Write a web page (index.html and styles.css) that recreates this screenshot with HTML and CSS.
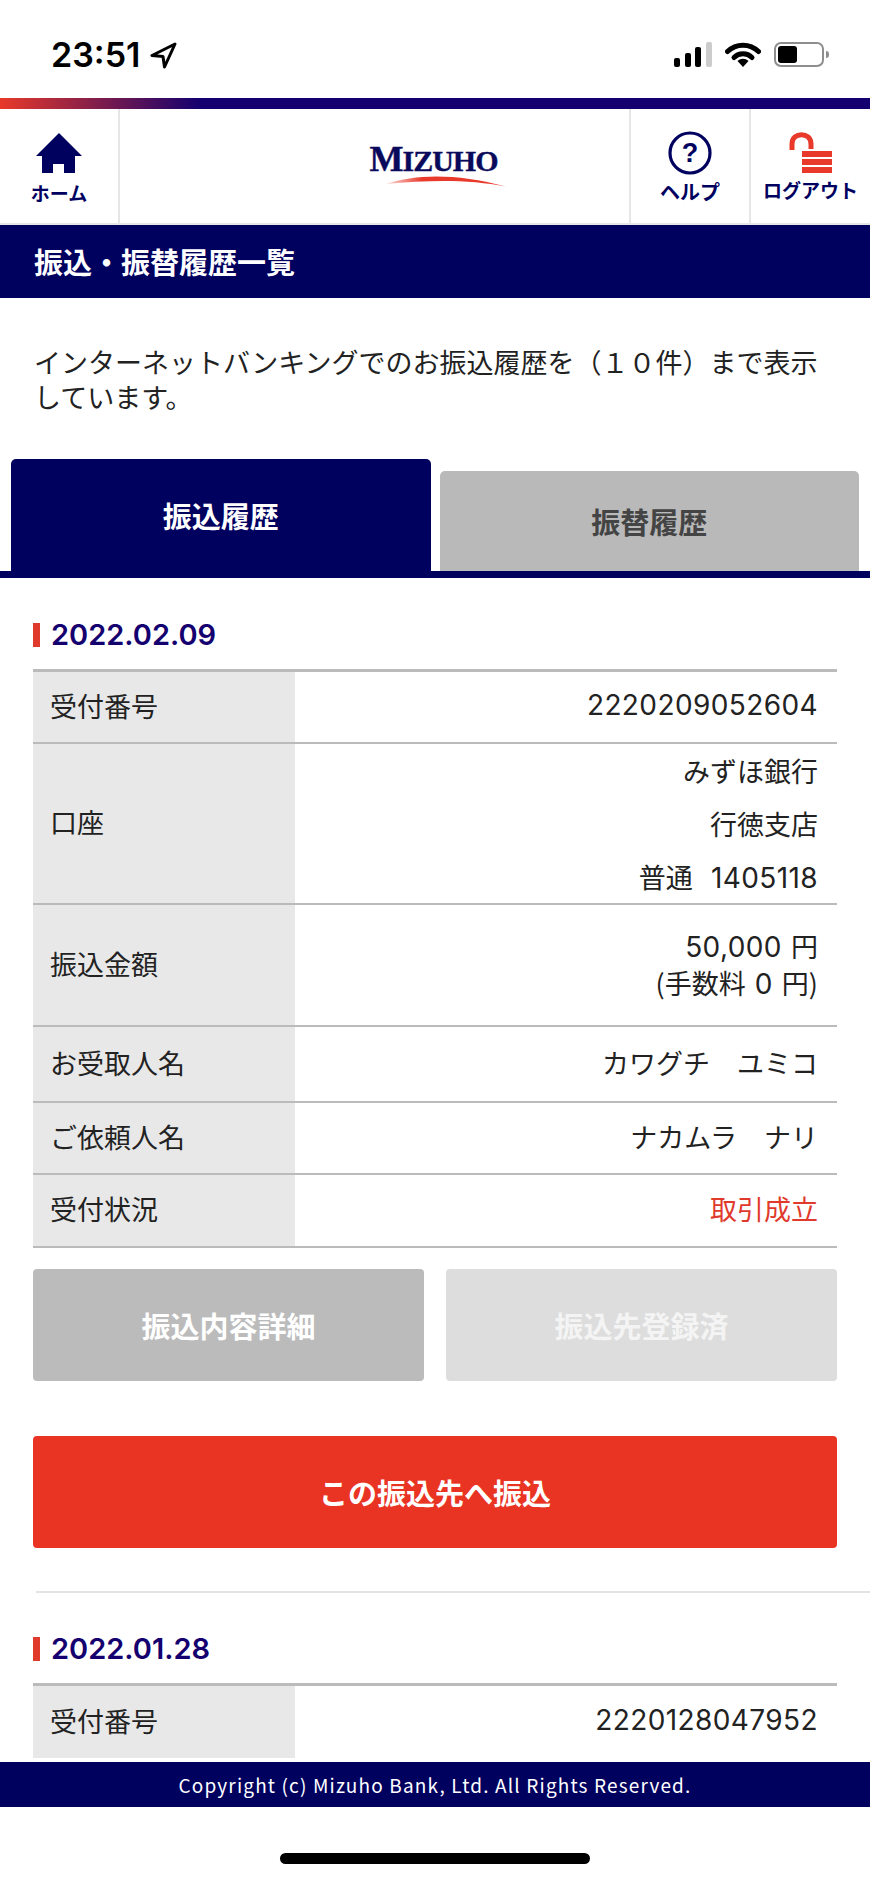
FILE: index.html
```html
<!DOCTYPE html>
<html lang="ja">
<head>
    <meta charset="UTF-8">
    <meta name="viewport" content="width=device-width, initial-scale=1.0">
    <title>振込・振替履歴一覧</title>
    <link rel="stylesheet" href="styles.css">
</head>
<body>
    <div class="status-bar">
        <div class="status-time">
            <span>23:51</span>
            <svg class="status-arrow" width="27" height="27" viewBox="0 0 27 27">
                <path d="M25 2 L2 13.5 L13 14.5 L14.5 25 Z" fill="none" stroke="#000" stroke-width="3" stroke-linejoin="round"/>
            </svg>
        </div>
        <div class="status-icons">
            <div class="signal">
                <span class="bar bar-1"></span>
                <span class="bar bar-2"></span>
                <span class="bar bar-3"></span>
                <span class="bar bar-4"></span>
            </div>
            <svg width="36" height="25" viewBox="0 0 36 25">
                <path d="M2.5 9.5 C11 1 25 1 33.5 9.5" fill="none" stroke="#000" stroke-width="5" stroke-linecap="round"/>
                <path d="M9 15.5 C14 10.5 22 10.5 27 15.5" fill="none" stroke="#000" stroke-width="5" stroke-linecap="round"/>
                <path d="M12.5 19 L18 25 L23.5 19 C20 16 16 16 12.5 19 Z" fill="#000"/>
            </svg>
            <div class="battery">
                <div class="battery-body"><div class="battery-fill"></div></div>
                <div class="battery-nub"></div>
            </div>
        </div>
    </div>

    <div class="accent-bar"></div>

    <header class="nav">
        <a class="nav-item nav-home">
            <svg width="46" height="41" viewBox="0 0 46 41">
                <path d="M23 0 L46 23 L39 23 L39 40 L28 40 L28 31 L17 31 L17 40 L6 40 L6 23 L0 23 Z" fill="#00005f"/>
            </svg>
            <span>ホーム</span>
        </a>
        <div class="nav-logo">
            <div class="logo-text"><span class="logo-m">M</span>IZUHO</div>
            <svg class="logo-swoosh" width="120" height="12" viewBox="0 0 120 12">
                <defs>
                    <linearGradient id="swoosh" x1="0" x2="1" y1="0" y2="0">
                        <stop offset="0" stop-color="#e8392a" stop-opacity="0.15"/>
                        <stop offset="0.3" stop-color="#e8392a"/>
                        <stop offset="1" stop-color="#e8392a"/>
                    </linearGradient>
                </defs>
                <path d="M0 9 C30 -1 70 -2 120 11.5 C85 4.5 45 4.5 0 9 Z" fill="url(#swoosh)"/>
            </svg>
        </div>
        <a class="nav-item nav-help">
            <svg width="44" height="44" viewBox="0 0 44 44">
                <circle cx="22" cy="22" r="20" fill="none" stroke="#00005f" stroke-width="3.2"/>
                <text x="22" y="31" class="help-mark">?</text>
            </svg>
            <span>ヘルプ</span>
        </a>
        <a class="nav-item nav-logout">
            <svg width="44" height="42" viewBox="0 0 44 42">
                <path d="M3 18 L3 12 C3 -0.5 22 -0.5 22 12 L22 17" fill="none" stroke="#e8392a" stroke-width="5"/>
                <rect x="13" y="19" width="30" height="6" fill="#e8392a"/>
                <rect x="13" y="27" width="30" height="6" fill="#e8392a"/>
                <rect x="13" y="35" width="30" height="6" fill="#e8392a"/>
            </svg>
            <span>ログアウト</span>
        </a>
    </header>

    <h1 class="page-title">振込・振替履歴一覧</h1>

    <main class="content">
        <p class="notice">インターネットバンキングでのお振込履歴を（１０件）まで表示<br>しています。</p>

        <div class="tabs">
            <div class="tab tab-active">振込履歴</div>
            <div class="tab">振替履歴</div>
        </div>

        <section class="history">
            <h2 class="history-date">2022.02.09</h2>
            <div class="detail-table">
                <div class="row">
                    <div class="row-label">受付番号</div>
                    <div class="row-value num">2220209052604</div>
                </div>
                <div class="row row-account">
                    <div class="row-label">口座</div>
                    <div class="row-value">
                        <div>みずほ銀行</div>
                        <div>行徳支店</div>
                        <div>普通 &nbsp;<span class="num">1405118</span></div>
                    </div>
                </div>
                <div class="row row-amount">
                    <div class="row-label">振込金額</div>
                    <div class="row-value">
                        <div><span class="num">50,000</span> 円</div>
                        <div>(手数料 <span class="num">0</span> 円)</div>
                    </div>
                </div>
                <div class="row row-name">
                    <div class="row-label">お受取人名</div>
                    <div class="row-value">カワグチ　ユミコ</div>
                </div>
                <div class="row">
                    <div class="row-label">ご依頼人名</div>
                    <div class="row-value">ナカムラ　ナリ</div>
                </div>
                <div class="row row-last">
                    <div class="row-label">受付状況</div>
                    <div class="row-value status-ok">取引成立</div>
                </div>
            </div>
            <div class="button-pair">
                <a class="btn btn-gray">振込内容詳細</a>
                <a class="btn btn-disabled">振込先登録済</a>
            </div>
            <a class="btn btn-red">この振込先へ振込</a>
        </section>

        <hr class="divider">

        <section class="history history-next">
            <h2 class="history-date">2022.01.28</h2>
            <div class="detail-table">
                <div class="row row-open">
                    <div class="row-label">受付番号</div>
                    <div class="row-value num">2220128047952</div>
                </div>
            </div>
        </section>
    </main>

    <footer class="copyright">Copyright (c) Mizuho Bank, Ltd. All Rights Reserved.</footer>

    <div class="home-area"><div class="home-indicator"></div></div>
</body>
</html>
```

FILE: styles.css
```css
:root {
    --navy: #00005f;
    --red: #e93323;
    --text-red: #e03a2c;
    --line: #bbbbbb;
    --label-bg: #e8e8e8;
}

* {
    margin: 0;
    padding: 0;
    box-sizing: border-box;
}

body {
    font-family: "Noto Sans CJK JP", "Noto Sans", sans-serif;
    background: #fff;
    color: #222;
    width: 870px;
    height: 1883px;
    display: flex;
    flex-direction: column;
    overflow: hidden;
}

/* status bar */
.status-bar {
    height: 98px;
    flex: none;
    display: flex;
    justify-content: space-between;
    align-items: flex-start;
    padding: 36px 41px 0 51px;
}

.status-time {
    display: flex;
    align-items: center;
    gap: 10px;
    font-family: Inter, sans-serif;
    font-size: 34px;
    font-weight: 600;
    line-height: 38px;
    color: #000;
}

.status-icons {
    display: flex;
    align-items: flex-start;
    gap: 13px;
    padding-top: 6px;
}

.signal {
    display: flex;
    align-items: flex-end;
    gap: 4.67px;
    height: 25px;
}

.bar {
    width: 6px;
    background: #000;
    border-radius: 2px;
}

.bar-1 { height: 9px; }
.bar-2 { height: 14px; }
.bar-3 { height: 20px; }
.bar-4 { height: 25px; background: #ccc; }

.battery {
    display: flex;
    align-items: center;
    gap: 2px;
}

.battery-body {
    width: 50px;
    height: 25px;
    border: 2px solid #8e8e8e;
    border-radius: 7px;
    padding: 2px;
}

.battery-fill {
    width: 19px;
    height: 100%;
    background: #000;
    border-radius: 3px;
}

.battery-nub {
    width: 3px;
    height: 7px;
    background: #8e8e8e;
    border-radius: 0 3px 3px 0;
}

/* header */
.accent-bar {
    height: 11px;
    flex: none;
    background: linear-gradient(90deg, #e8392a 0, #14006f 200px);
}

.nav {
    height: 116px;
    flex: none;
    display: flex;
    border-bottom: 2px solid #e6e6e6;
}

.nav-item {
    display: flex;
    flex-direction: column;
    align-items: center;
    font-size: 19px;
    font-weight: 700;
    line-height: 26px;
    color: var(--navy);
}

.nav-home {
    width: 120px;
    padding-top: 24px;
    gap: 6px;
    border-right: 2px solid #e6e6e6;
}

.nav-help {
    width: 120px;
    padding-top: 22px;
    gap: 4px;
    font-size: 20px;
    border-left: 2px solid #e6e6e6;
}

.nav-logout {
    width: 121px;
    padding-top: 23px;
    gap: 3px;
    border-left: 2px solid #e6e6e6;
}

.nav-logo {
    flex: 1;
    display: flex;
    flex-direction: column;
    align-items: center;
    padding: 33px 0 0 118px;
}

.logo-text {
    font-family: "Liberation Serif", serif;
    font-size: 30px;
    font-weight: 700;
    line-height: 34px;
    letter-spacing: -1px;
    color: #0a0a5c;
    -webkit-text-stroke: 0.4px #0a0a5c;
}

.logo-m {
    font-size: 36px;
}

.logo-swoosh {
    margin: -3px 0 0 25px;
}

.help-mark {
    font-family: "Liberation Sans", sans-serif;
    font-size: 27px;
    font-weight: 700;
    text-anchor: middle;
    fill: var(--navy);
}

.page-title {
    height: 73px;
    flex: none;
    background: var(--navy);
    color: #fff;
    font-size: 29px;
    font-weight: 700;
    line-height: 73px;
    padding-left: 34px;
}

/* content */
.content {
    flex: 1;
    overflow: hidden;
}

.notice {
    font-size: 27px;
    line-height: 35px;
    padding: 46px 33px 0 34px;
    margin-bottom: 45px;
    white-space: nowrap;
}

.tabs {
    display: flex;
    align-items: flex-end;
    gap: 9px;
    padding: 0 11px;
    border-bottom: 7px solid var(--navy);
}

.tab {
    width: 420px;
    height: 100px;
    background: #b9b9b9;
    color: #444;
    font-size: 29px;
    font-weight: 700;
    border-radius: 5px 5px 0 0;
    display: flex;
    align-items: center;
    justify-content: center;
}

.tab-active {
    height: 112px;
    background: var(--navy);
    color: #fff;
}

.history {
    padding: 45px 33px 0;
}

.history-next {
    padding-top: 44px;
}

.history-date {
    border-left: 7px solid var(--text-red);
    padding-left: 11px;
    font-family: Inter, sans-serif;
    font-size: 29px;
    font-weight: 600;
    line-height: 24px;
    color: #14006e;
    margin-bottom: 22px;
}

.detail-table {
    border-top: 3px solid var(--line);
}

.row {
    display: flex;
    min-height: 72px;
    border-bottom: 2px solid var(--line);
    font-size: 27px;
}

.row-open {
    border-bottom: none;
}

.row-account {
    min-height: 161px;
}

.row-amount {
    min-height: 122px;
}

.row-name {
    min-height: 76px;
}

.row-last {
    min-height: 73px;
}

.row-label {
    width: 262px;
    flex: none;
    display: flex;
    align-items: center;
    padding: 0 0 4px 17px;
    background: var(--label-bg);
}

.row-value {
    flex: 1;
    display: flex;
    flex-direction: column;
    justify-content: center;
    text-align: right;
    padding: 0 19px 4px 0;
    word-spacing: 3px;
}

.row-account .row-value {
    line-height: 53px;
    padding-bottom: 0;
}

.row-account .row-value div {
    height: 53px;
}

.row-amount .row-value {
    line-height: 36px;
    padding-bottom: 0;
}

.num {
    font-family: Inter, sans-serif;
    font-size: 28px;
    letter-spacing: 0.4px;
}

.status-ok {
    color: var(--text-red);
}

.button-pair {
    display: flex;
    gap: 22px;
    margin-top: 21px;
}

.btn {
    height: 112px;
    flex: 1;
    display: flex;
    align-items: center;
    justify-content: center;
    border-radius: 4px;
    color: #fff;
    font-size: 29px;
    font-weight: 700;
}

.btn-gray {
    background: var(--line);
}

.btn-disabled {
    background: #dddddd;
    color: #f4f4f4;
}

.btn-red {
    background: var(--red);
    margin-top: 55px;
}

.divider {
    border: none;
    border-top: 2px solid #e3e3e3;
    margin: 43px 0 0 36px;
}

/* footer */
.copyright {
    height: 45px;
    flex: none;
    background: var(--navy);
    color: #fff;
    font-size: 19px;
    line-height: 45px;
    letter-spacing: 1.15px;
    text-align: center;
}

.home-area {
    height: 76px;
    flex: none;
    padding-top: 46px;
}

.home-indicator {
    width: 310px;
    height: 11px;
    margin: 0 auto;
    background: #000;
    border-radius: 6px;
}
```
